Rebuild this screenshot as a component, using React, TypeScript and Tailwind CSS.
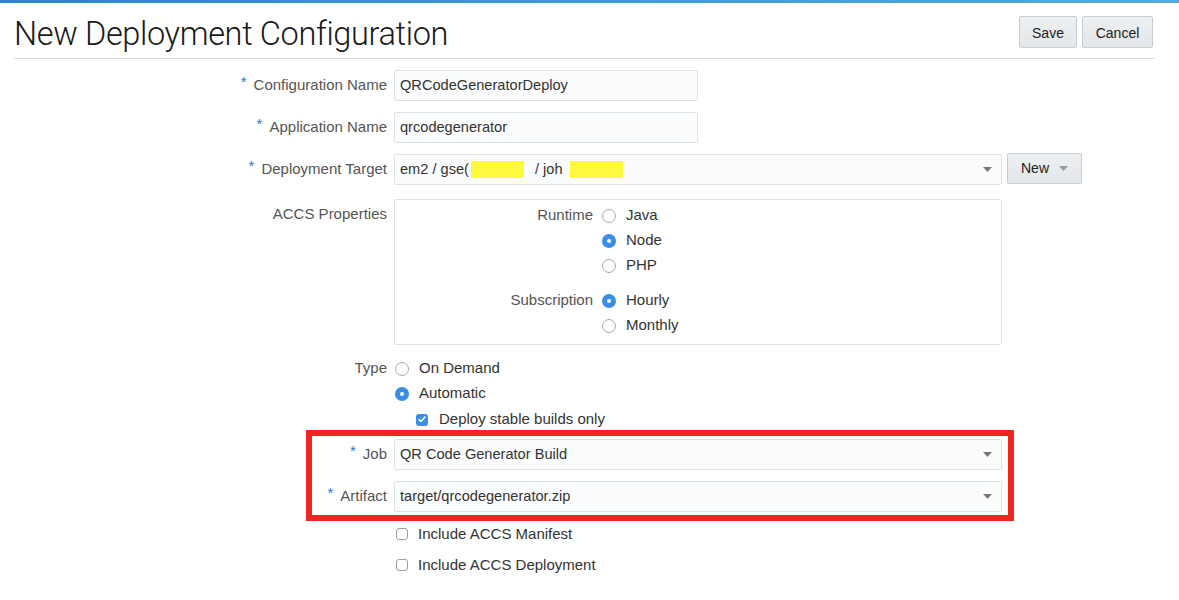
import React from "react";

function Star() {
  return <span className="text-[#1f78d1] text-[15px] leading-none relative -top-[4px] mr-[7px]">*</span>;
}

function Caret({ className }: { className?: string }) {
  return (
    <svg width="9" height="5" viewBox="0 0 9 5" className={className}>
      <path d="M0 0H9L4.5 5Z" fill="currentColor" />
    </svg>
  );
}

function Radio({ checked }: { checked?: boolean }) {
  return checked ? (
    <span className="w-[14px] h-[14px] rounded-full bg-[#3a8ee8] flex items-center justify-center shrink-0">
      <span className="w-[4px] h-[4px] rounded-full bg-white" />
    </span>
  ) : (
    <span className="w-[14px] h-[14px] rounded-full border border-[#acacac] bg-white shrink-0" />
  );
}

function Check({ checked }: { checked?: boolean }) {
  return checked ? (
    <span className="w-[12px] h-[12px] rounded-[3px] bg-[#3a8ee8] flex items-center justify-center shrink-0">
      <svg width="8" height="7" viewBox="0 0 8 7">
        <path d="M1 3.6L3 5.5L7 1" stroke="white" strokeWidth="1.6" fill="none" strokeLinecap="round" strokeLinejoin="round" />
      </svg>
    </span>
  ) : (
    <span className="w-[12px] h-[12px] rounded-[3px] border border-[#9d9d9d] bg-white shrink-0" />
  );
}

function Select({ children }: { children: React.ReactNode }) {
  return (
    <div className="ml-[7px] w-[608px] h-[31px] border border-[#dde2e7] bg-[#fbfcfd] rounded-[2px] flex items-center pl-[5px] pr-[9px] text-[14.6px] text-[#333]">
      <div className="flex-1 flex items-center">{children}</div>
      <Caret className="text-[#7a7a7a]" />
    </div>
  );
}

function TextInput({ value }: { value: string }) {
  return (
    <div className="ml-[7px] w-[304px] h-[31px] border border-[#dde2e7] bg-[#fbfcfd] rounded-[2px] flex items-center pl-[5px] text-[14.6px] text-[#333]">
      {value}
    </div>
  );
}

export default function App() {
  return (
    <div className="w-[1179px] h-[600px] bg-white overflow-hidden font-['Liberation_Sans',Arial,sans-serif] text-[#333]">
      <div className="h-[3px] bg-gradient-to-r from-[#2886cc] via-[#3d9ad6] to-[#52aade]" />

      {/* Header */}
      <div className="ml-[14px] mr-[24px] h-[56px] border-b border-[#d5dee7] flex items-start justify-between">
        <div className="mt-[11px] font-['Roboto',sans-serif] font-light text-[32.5px] leading-[40px] text-[#1a1a1a] tracking-[-0.35px]">
          New Deployment Configuration
        </div>
        <div className="mt-[13px] mr-[2px] flex gap-[5px]">
          <button className="w-[58px] h-[32px] pt-[2px] border border-[#c6ced6] rounded-[2px] bg-gradient-to-b from-[#eef0f2] to-[#e3e6e9] text-[14px] text-[#222]">
            Save
          </button>
          <button className="w-[71px] h-[32px] pt-[2px] border border-[#c6ced6] rounded-[2px] bg-gradient-to-b from-[#eef0f2] to-[#e3e6e9] text-[14px] text-[#222]">
            Cancel
          </button>
        </div>
      </div>

      {/* Form */}
      <div className="mt-[11px] text-[15px]">
        <div className="flex items-start mb-[11px]">
          <div className="w-[387px] h-[31px] flex items-center justify-end text-[#555]">
            <Star />
            Configuration Name
          </div>
          <TextInput value="QRCodeGeneratorDeploy" />
        </div>
        <div className="flex items-start mb-[11px]">
          <div className="w-[387px] h-[31px] flex items-center justify-end text-[#555]">
            <Star />
            Application Name
          </div>
          <TextInput value="qrcodegenerator" />
        </div>
        <div className="flex items-start">
          <div className="w-[387px] h-[31px] flex items-center justify-end text-[#555]">
            <Star />
            Deployment Target
          </div>
          <Select>
            <span>em2 / gse(</span>
            <span className="ml-[2px] w-[53px] h-[17px] bg-[#fdf93c]" />
            <span className="ml-[11px]">/ joh</span>
            <span className="ml-[7px] w-[53px] h-[17px] bg-[#fdf93c]" />
          </Select>
          <button className="ml-[5px] -mt-[1px] w-[75px] h-[31px] border border-[#c6ced6] rounded-[2px] bg-gradient-to-b from-[#eef0f2] to-[#e3e6e9] text-[14px] text-[#222] flex items-center pl-[13px]">
            New
            <Caret className="ml-[10px] text-[#9a9a9a]" />
          </button>
        </div>

        {/* ACCS Properties */}
        <div className="flex items-start mt-[14px]">
          <div className="w-[387px] h-[31px] flex items-center justify-end text-[#555]">ACCS Properties</div>
          <div className="ml-[7px] w-[608px] border border-[#dde2e7] rounded-[2px] pt-[3px] pb-[6px]">
            <div className="flex items-start">
              <div className="w-[198px] h-[25px] flex items-center justify-end text-[#555]">Runtime</div>
              <div className="ml-[9px] flex flex-col">
                <div className="h-[25px] flex items-center"><Radio /><span className="ml-[10px]">Java</span></div>
                <div className="h-[25px] flex items-center"><Radio checked /><span className="ml-[10px]">Node</span></div>
                <div className="h-[25px] flex items-center"><Radio /><span className="ml-[10px]">PHP</span></div>
              </div>
            </div>
            <div className="flex items-start mt-[10px]">
              <div className="w-[198px] h-[25px] flex items-center justify-end text-[#555]">Subscription</div>
              <div className="ml-[9px] flex flex-col">
                <div className="h-[25px] flex items-center"><Radio checked /><span className="ml-[10px]">Hourly</span></div>
                <div className="h-[25px] flex items-center"><Radio /><span className="ml-[10px]">Monthly</span></div>
              </div>
            </div>
          </div>
        </div>

        {/* Type */}
        <div className="flex items-start mt-[11px]">
          <div className="w-[387px] h-[25px] flex items-center justify-end text-[#555]">Type</div>
          <div className="ml-[8px] flex flex-col">
            <div className="h-[25px] flex items-center"><Radio /><span className="ml-[10px]">On Demand</span></div>
            <div className="h-[25px] flex items-center"><Radio checked /><span className="ml-[10px]">Automatic</span></div>
            <div className="mt-[3px] h-[21px] flex items-center ml-[21px]"><Check checked /><span className="ml-[11px]">Deploy stable builds only</span></div>
          </div>
        </div>

        {/* Highlighted */}
        <div className="ml-[306px] w-[708px] border-[6px] border-[#f1251f] pt-[3px] pb-[3px]">
          <div className="flex items-start mb-[11px]">
            <div className="w-[75px] h-[31px] flex items-center justify-end text-[#555]">
              <Star />
              Job
            </div>
            <Select>QR Code Generator Build</Select>
          </div>
          <div className="flex items-start">
            <div className="w-[75px] h-[31px] flex items-center justify-end text-[#555]">
              <Star />
              Artifact
            </div>
            <Select>target/qrcodegenerator.zip</Select>
          </div>
        </div>

        <div className="ml-[396px] mt-[1px] h-[24px] flex items-center"><Check /><span className="ml-[10px]">Include ACCS Manifest</span></div>
        <div className="ml-[396px] mt-[7px] h-[24px] flex items-center"><Check /><span className="ml-[10px]">Include ACCS Deployment</span></div>
      </div>
    </div>
  );
}
